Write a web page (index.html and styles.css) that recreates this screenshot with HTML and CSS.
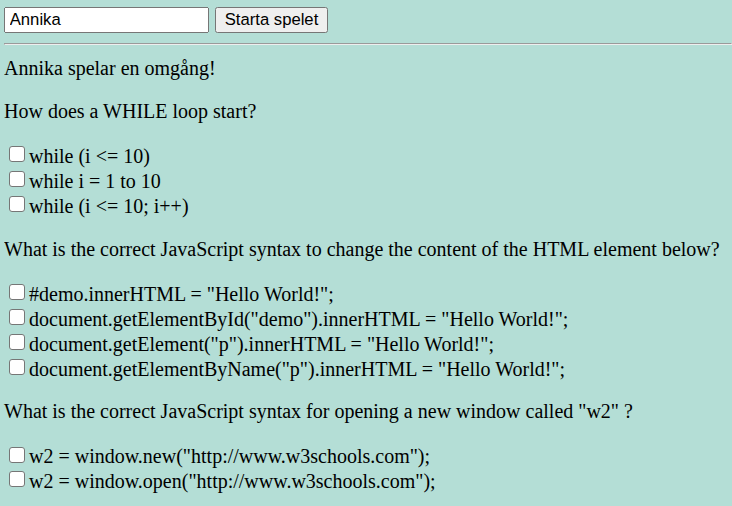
FILE: index.html
```html
<!DOCTYPE html>
<html lang="sv">
<head>
<meta charset="utf-8">
<title>Quiz</title>
<link rel="stylesheet" href="styles.css">
</head>
<body>
<div class="start">
<input class="name" type="text" value="Annika"> <button class="btn" type="button">Starta spelet</button>
</div>
<hr class="rule">
<p class="line intro">Annika spelar en omgång!</p>
<p class="line">How does a WHILE loop start?</p>
<div class="opts">
<input class="cb" type="checkbox">while (i &lt;= 10)<br>
<input class="cb" type="checkbox">while i = 1 to 10<br>
<input class="cb" type="checkbox">while (i &lt;= 10; i++)
</div>
<p class="line">What is the correct JavaScript syntax to change the content of the HTML element below?</p>
<div class="opts">
<input class="cb" type="checkbox">#demo.innerHTML = "Hello World!";<br>
<input class="cb" type="checkbox">document.getElementById("demo").innerHTML = "Hello World!";<br>
<input class="cb" type="checkbox">document.getElement("p").innerHTML = "Hello World!";<br>
<input class="cb" type="checkbox">document.getElementByName("p").innerHTML = "Hello World!";
</div>
<p class="line">What is the correct JavaScript syntax for opening a new window called "w2" ?</p>
<div class="opts">
<input class="cb" type="checkbox">w2 = window.new("http://www.w3schools.com");<br>
<input class="cb" type="checkbox">w2 = window.open("http://www.w3schools.com");
</div>
</body>
</html>
```

FILE: styles.css
```css
html {
  zoom: 1.25;
  background: #b4ded6;
}
body {
  margin: 5.6px 0 0 3.2px;
  font-family: "Liberation Serif", "Times New Roman", serif;
  font-size: 16px;
  color: #000;
}
.name, .btn {
  font-family: "Liberation Sans", Arial, sans-serif;
  box-sizing: border-box;
  height: 20.8px;
}
.name {
  width: 164px;
  margin-right: 1px;
  padding-left: 3px;
}
.rule {
  margin: 8px 0 9.6px;
}
.intro {
  margin-top: 0;
}
.cb {
  appearance: none;
  -webkit-appearance: none;
  box-sizing: border-box;
  width: 12.8px;
  height: 12.8px;
  margin: 2.5px 3.2px 3px 4px;
  vertical-align: -2.4px;
  border: 1px solid #767676;
  border-radius: 2.4px;
  background: #fff;
}
```
